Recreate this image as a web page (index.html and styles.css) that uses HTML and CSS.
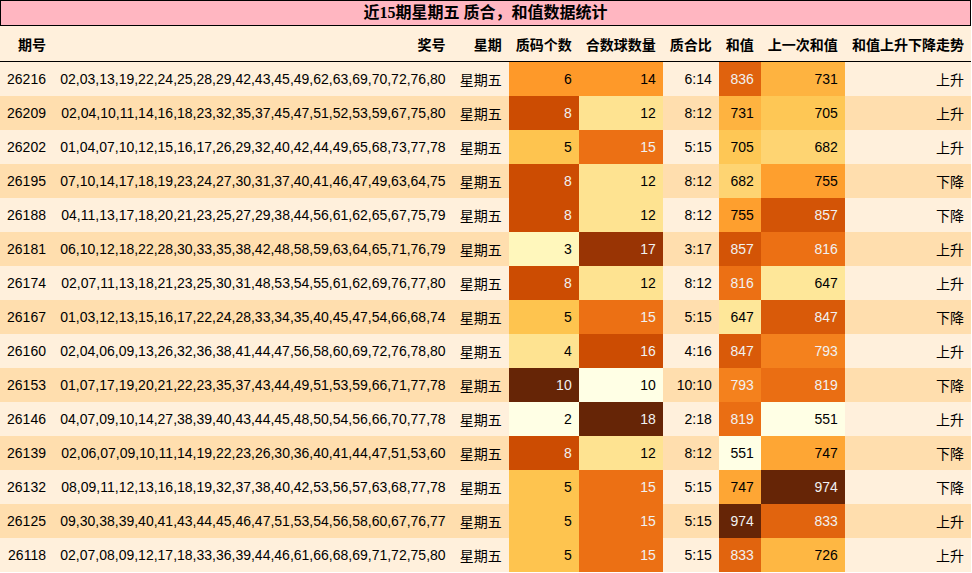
FILE: index.html
```html
<!DOCTYPE html>
<html lang="zh">
<head>
<meta charset="utf-8">
<title>近15期星期五 质合，和值数据统计</title>
<link rel="stylesheet" href="styles.css">
</head>
<body>
<table class="stats">
  <caption class="title">近15期星期五 质合，和值数据统计</caption>
  <thead>
    <tr class="head-row">
      <th>期号</th><th>奖号</th><th>星期</th><th>质码个数</th><th>合数球数量</th><th>质合比</th><th>和值</th><th>上一次和值</th><th>和值上升下降走势</th>
    </tr>
  </thead>
  <tbody>
    <tr class="row-light"><td>26216</td><td>02,03,13,19,22,24,25,28,29,42,43,45,49,62,63,69,70,72,76,80</td><td>星期五</td><td style="background:#fe9929;color:#000">6</td><td style="background:#fe9929;color:#000">14</td><td>6:14</td><td style="background:rgb(224,98,13);color:#f1f1f1">836</td><td style="background:rgb(254,179,64);color:#000">731</td><td>上升</td></tr>
    <tr class="row-dark"><td>26209</td><td>02,04,10,11,14,16,18,23,32,35,37,45,47,51,52,53,59,67,75,80</td><td>星期五</td><td style="background:#cc4c02;color:#f1f1f1">8</td><td style="background:#fee391;color:#000">12</td><td>8:12</td><td style="background:rgb(254,179,64);color:#000">731</td><td style="background:rgb(254,199,85);color:#000">705</td><td>上升</td></tr>
    <tr class="row-light"><td>26202</td><td>01,04,07,10,12,15,16,17,26,29,32,40,42,44,49,65,68,73,77,78</td><td>星期五</td><td style="background:#fec44f;color:#000">5</td><td style="background:#ec7014;color:#f1f1f1">15</td><td>5:15</td><td style="background:rgb(254,199,85);color:#000">705</td><td style="background:rgb(254,212,114);color:#000">682</td><td>上升</td></tr>
    <tr class="row-dark"><td>26195</td><td>07,10,14,17,18,19,23,24,27,30,31,37,40,41,46,47,49,63,64,75</td><td>星期五</td><td style="background:#cc4c02;color:#f1f1f1">8</td><td style="background:#fee391;color:#000">12</td><td>8:12</td><td style="background:rgb(254,212,114);color:#000">682</td><td style="background:rgb(254,159,46);color:#000">755</td><td>下降</td></tr>
    <tr class="row-light"><td>26188</td><td>04,11,13,17,18,20,21,23,25,27,29,38,44,56,61,62,65,67,75,79</td><td>星期五</td><td style="background:#cc4c02;color:#f1f1f1">8</td><td style="background:#fee391;color:#000">12</td><td>8:12</td><td style="background:rgb(254,159,46);color:#000">755</td><td style="background:rgb(211,84,6);color:#f1f1f1">857</td><td>下降</td></tr>
    <tr class="row-dark"><td>26181</td><td>06,10,12,18,22,28,30,33,35,38,42,48,58,59,63,64,65,71,76,79</td><td>星期五</td><td style="background:#fff7bc;color:#000">3</td><td style="background:#993404;color:#f1f1f1">17</td><td>3:17</td><td style="background:rgb(211,84,6);color:#f1f1f1">857</td><td style="background:rgb(236,112,20);color:#f1f1f1">816</td><td>上升</td></tr>
    <tr class="row-light"><td>26174</td><td>02,07,11,13,18,21,23,25,30,31,48,53,54,55,61,62,69,76,77,80</td><td>星期五</td><td style="background:#cc4c02;color:#f1f1f1">8</td><td style="background:#fee391;color:#000">12</td><td>8:12</td><td style="background:rgb(236,112,20);color:#f1f1f1">816</td><td style="background:rgb(254,231,153);color:#000">647</td><td>上升</td></tr>
    <tr class="row-dark"><td>26167</td><td>01,03,12,13,15,16,17,22,24,28,33,34,35,40,45,47,54,66,68,74</td><td>星期五</td><td style="background:#fec44f;color:#000">5</td><td style="background:#ec7014;color:#f1f1f1">15</td><td>5:15</td><td style="background:rgb(254,231,153);color:#000">647</td><td style="background:rgb(217,90,9);color:#f1f1f1">847</td><td>下降</td></tr>
    <tr class="row-light"><td>26160</td><td>02,04,06,09,13,26,32,36,38,41,44,47,56,58,60,69,72,76,78,80</td><td>星期五</td><td style="background:#fee391;color:#000">4</td><td style="background:#cc4c02;color:#f1f1f1">16</td><td>4:16</td><td style="background:rgb(217,90,9);color:#f1f1f1">847</td><td style="background:rgb(244,129,29);color:#f1f1f1">793</td><td>上升</td></tr>
    <tr class="row-dark"><td>26153</td><td>01,07,17,19,20,21,22,23,35,37,43,44,49,51,53,59,66,71,77,78</td><td>星期五</td><td style="background:#662506;color:#f1f1f1">10</td><td style="background:#ffffe5;color:#000">10</td><td>10:10</td><td style="background:rgb(244,129,29);color:#f1f1f1">793</td><td style="background:rgb(234,110,19);color:#f1f1f1">819</td><td>下降</td></tr>
    <tr class="row-light"><td>26146</td><td>04,07,09,10,14,27,38,39,40,43,44,45,48,50,54,56,66,70,77,78</td><td>星期五</td><td style="background:#ffffe5;color:#000">2</td><td style="background:#662506;color:#f1f1f1">18</td><td>2:18</td><td style="background:rgb(234,110,19);color:#f1f1f1">819</td><td style="background:rgb(255,255,229);color:#000">551</td><td>上升</td></tr>
    <tr class="row-dark"><td>26139</td><td>02,06,07,09,10,11,14,19,22,23,26,30,36,40,41,44,47,51,53,60</td><td>星期五</td><td style="background:#cc4c02;color:#f1f1f1">8</td><td style="background:#fee391;color:#000">12</td><td>8:12</td><td style="background:rgb(255,255,229);color:#000">551</td><td style="background:rgb(254,166,52);color:#000">747</td><td>下降</td></tr>
    <tr class="row-light"><td>26132</td><td>08,09,11,12,13,16,18,19,32,37,38,40,42,53,56,57,63,68,77,78</td><td>星期五</td><td style="background:#fec44f;color:#000">5</td><td style="background:#ec7014;color:#f1f1f1">15</td><td>5:15</td><td style="background:rgb(254,166,52);color:#000">747</td><td style="background:rgb(102,37,6);color:#f1f1f1">974</td><td>下降</td></tr>
    <tr class="row-dark"><td>26125</td><td>09,30,38,39,40,41,43,44,45,46,47,51,53,54,56,58,60,67,76,77</td><td>星期五</td><td style="background:#fec44f;color:#000">5</td><td style="background:#ec7014;color:#f1f1f1">15</td><td>5:15</td><td style="background:rgb(102,37,6);color:#f1f1f1">974</td><td style="background:rgb(225,100,14);color:#f1f1f1">833</td><td>上升</td></tr>
    <tr class="row-light"><td>26118</td><td>02,07,08,09,12,17,18,33,36,39,44,46,61,66,68,69,71,72,75,80</td><td>星期五</td><td style="background:#fec44f;color:#000">5</td><td style="background:#ec7014;color:#f1f1f1">15</td><td>5:15</td><td style="background:rgb(225,100,14);color:#f1f1f1">833</td><td style="background:rgb(254,183,67);color:#000">726</td><td>上升</td></tr>
  </tbody>
</table>
</body>
</html>
```

FILE: styles.css
```css
html, body {
  margin: 0;
  padding: 0;
  background: #ffffff;
}

.stats {
  width: 971px;
  border-collapse: collapse;
  border-spacing: 0;
  font-family: "Liberation Sans", "Noto Sans CJK SC", sans-serif;
  font-size: 14px;
  color: #000;
}

.title {
  box-sizing: border-box;
  height: 26px;
  line-height: 24px;
  border: 1px solid #000;
  background: #ffb6c1;
  font-family: "Liberation Serif", "Noto Sans CJK SC", serif;
  font-size: 16px;
  font-weight: bold;
  text-align: center;
  color: #000;
}

.head-row th {
  height: 35px;
  padding: 0 7px;
  background: #fff0dc;
  font-weight: bold;
  text-align: right;
  white-space: nowrap;
  border-bottom: 1px solid #000;
}

tbody td {
  height: 34px;
  padding: 0 7px;
  text-align: right;
  white-space: nowrap;
}

.row-light td {
  background: #fff0dc;
}

.row-dark td {
  background: #ffdeae;
}
```
